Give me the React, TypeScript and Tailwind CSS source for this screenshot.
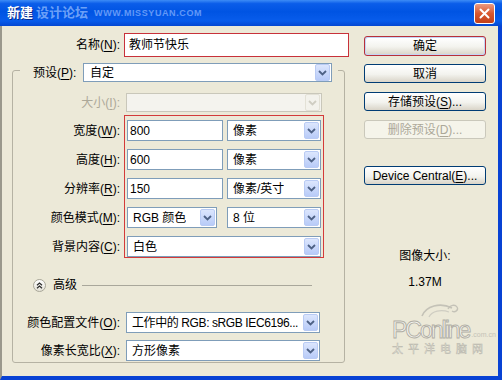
import React from "react";
import clsx from "clsx";

// small XP-style combo arrow
const Arrow = ({ disabled }: { disabled?: boolean }) => (
  <span
    className={clsx(
      "flex h-[17px] w-[15px] shrink-0 items-center justify-center rounded-[2px] border",
      disabled
        ? "border-[#e3e1d6] bg-[#f3f2ec]"
        : "border-[#b9cbf4] bg-[linear-gradient(to_bottom,#dce6fd,#b8cbf8)]"
    )}
  >
    <svg width="9" height="6" viewBox="0 0 9 6">
      <path d="M1 1l3.5 3.5L8 1" fill="none" stroke={disabled ? "#cfcdc2" : "#4d6185"} strokeWidth="1.8" />
    </svg>
  </span>
);

const Select = ({
  value,
  className,
  disabled,
}: {
  value?: string;
  className: string;
  disabled?: boolean;
}) => (
  <div
    className={clsx(
      "flex shrink-0 items-center justify-between border pl-[5px] pr-[1px]",
      disabled ? "border-[#c9c7ba] bg-[#f4f3ee]" : "border-[#7f9db9] bg-white",
      className
    )}
  >
    <span className="overflow-hidden whitespace-nowrap">{value}</span>
    <Arrow disabled={disabled} />
  </div>
);

const TextBox = ({ value, className }: { value: string; className: string }) => (
  <div className={clsx("flex shrink-0 items-center border border-[#7f9db9] bg-white pl-[2px]", className)}>
    {value}
  </div>
);

const Btn = ({ children, disabled }: { children: React.ReactNode; disabled?: boolean }) => (
  <div
    className={clsx(
      "flex h-[19px] items-center justify-center rounded-[3px] border",
      disabled
        ? "border-[#cac8bb] bg-[#f5f4ea] text-[#aca899]"
        : "border-[#003c74] bg-[linear-gradient(to_bottom,#ffffff,#f3f3ee_55%,#d9d4c8)]"
    )}
  >
    {children}
  </div>
);

const Key = ({ k }: { k: string }) => <u className="underline-offset-[2px]">{k}</u>;

const Label = ({ children, muted }: { children: React.ReactNode; muted?: boolean }) => (
  <span className={clsx("w-[107px] shrink-0 text-right whitespace-nowrap", muted && "text-[#aca899]")}>
    {children}
  </span>
);

export default function App() {
  return (
    <div className="flex h-[380px] w-[502px] flex-col overflow-hidden font-['Liberation_Sans','Noto_Sans_CJK_SC',sans-serif] text-[12px] leading-[14px] text-black">
      {/* title bar */}
      <div className="flex h-[26px] shrink-0 items-center bg-[linear-gradient(to_bottom,#3d8cf6_0%,#0b5de9_14%,#0054e3_45%,#085ceb_80%,#0447d2_100%)] pl-[7px]">
        <span className="text-[13px] font-bold text-white [text-shadow:1px_1px_#0a2a8a]">新建</span>
        <span className="ml-[3px] text-[13px] font-bold text-[#9cc2ff]/70">设计论坛</span>
        <span className="ml-[6px] text-[9px] font-bold tracking-[0.6px] text-[#8cb6ff]/70">WWW.MISSYUAN.COM</span>
        <div className="ml-auto mr-[7px] flex h-[21px] w-[21px] items-center justify-center rounded-[3px] border border-white bg-[linear-gradient(to_bottom,#eb9a82,#d9582f_50%,#c2401a)]">
          <svg width="11" height="11" viewBox="0 0 11 11">
            <path d="M1.5 1.5l8 8M9.5 1.5l-8 8" stroke="white" strokeWidth="2" strokeLinecap="round" />
          </svg>
        </div>
      </div>

      {/* body */}
      <div className="relative flex flex-1 border-b-[4px] border-l-[2px] border-r-[4px] border-[#0842d4] border-l-[#9a988c] bg-[#ece9d8]">
        {/* left column */}
        <div className="flex w-[347px] shrink-0 flex-col pl-[10px] pt-[7px]">
          <div className="flex items-center">
            <span className="w-[108px] text-right">
              名称(<Key k="N" />):
            </span>
            <div className="ml-[4px] flex h-[24px] w-[225px] items-center border border-[#c8313a] bg-white pl-[4px]">
              教师节快乐
            </div>
          </div>

          <fieldset className="mt-[6px] w-[333px] rounded-[3px] border border-[#b5b2a3] pb-[1px]">
            <legend className="ml-[7px] h-[14px]">
              <div className="flex items-start pl-[13px] pr-[6px]">
                <span className="flex h-[19px] w-[50px] items-center">
                  预设(<Key k="P" />):
                </span>
                <Select value="自定" className="h-[19px] w-[249px] pl-[6px]" />
              </div>
            </legend>

            <div className="mt-[16px] flex items-center">
              <Label muted>
                大小(<Key k="I" />):
              </Label>
              <Select disabled className="ml-[6px] h-[19px] w-[196px]" />
            </div>

            <div className="mt-[3px] flex">
              <div className="flex flex-col gap-[8px] pt-[5px]">
                {[
                  ["宽度", "W"],
                  ["高度", "H"],
                  ["分辨率", "R"],
                  ["颜色模式", "M"],
                  ["背景内容", "C"],
                ].map(([t, k]) => (
                  <div key={k} className="flex h-[21px] items-center">
                    <Label>
                      {t}(<Key k={k} />):
                    </Label>
                  </div>
                ))}
              </div>
              <div className="ml-[4px] flex flex-col gap-[8px] border border-[#d33a3a] px-[2px] pt-[4px]">
                <div className="flex">
                  <TextBox value="800" className="h-[21px] w-[96px]" />
                  <Select value="像素" className="ml-[4px] h-[21px] w-[94px]" />
                </div>
                <div className="flex">
                  <TextBox value="600" className="h-[21px] w-[96px]" />
                  <Select value="像素" className="ml-[4px] h-[21px] w-[94px]" />
                </div>
                <div className="flex">
                  <TextBox value="150" className="h-[21px] w-[96px]" />
                  <Select value="像素/英寸" className="ml-[4px] h-[21px] w-[94px]" />
                </div>
                <div className="flex">
                  <Select value="RGB 颜色" className="h-[21px] w-[90px]" />
                  <Select value="8 位" className="ml-[10px] h-[21px] w-[94px]" />
                </div>
                <div className="flex">
                  <Select value="白色" className="h-[21px] w-[194px]" />
                </div>
              </div>
            </div>

            {/* advanced */}
            <div className="mt-[20px] flex items-center pl-[20px] pr-[32px]">
              <span className="flex h-[13px] w-[13px] items-center justify-center rounded-full border border-[#a8a698] bg-[linear-gradient(to_bottom,#ffffff,#e3e1d6)]">
                <svg width="7" height="7" viewBox="0 0 7 7">
                  <path d="M1 3.2L3.5 1 6 3.2M1 6.2L3.5 4 6 6.2" fill="none" stroke="#2b2b2b" strokeWidth="1.2" />
                </svg>
              </span>
              <span className="ml-[7px]">高级</span>
              <span className="ml-[5px] h-px flex-1 bg-[#a9a79b]" />
            </div>

            <div className="mt-[20px] flex items-center">
              <Label>
                颜色配置文件(<Key k="O" />):
              </Label>
              <Select
                value="工作中的 RGB: sRGB IEC6196..."
                className="ml-[6px] h-[21px] w-[194px] pl-[4px] tracking-[-0.4px]"
              />
            </div>
            <div className="mt-[7px] flex items-center">
              <Label>
                像素长宽比(<Key k="X" />):
              </Label>
              <Select value="方形像素" className="ml-[6px] h-[21px] w-[194px]" />
            </div>
          </fieldset>
        </div>

        {/* right column */}
        <div className="ml-[15px] flex w-[122px] flex-col pt-[10px]">
          <div className="h-[20px] rounded-[3px] border border-[#b8303a] bg-[#c5d5f5] p-px">
            <div className="flex h-full items-center justify-center rounded-[2px] bg-[linear-gradient(to_bottom,#ffffff,#f3f3ee_55%,#dcd7cb)]">
              确定
            </div>
          </div>
          <div className="mt-[8px]">
            <Btn>取消</Btn>
          </div>
          <div className="mt-[9px]">
            <Btn>
              存储预设(<Key k="S" />)...
            </Btn>
          </div>
          <div className="mt-[9px]">
            <Btn disabled>
              删除预设(<Key k="D" />)...
            </Btn>
          </div>
          <div className="mt-[27px]">
            <Btn>
              Device Central(<Key k="E" />)...
            </Btn>
          </div>
          <div className="mt-[64px] text-center">图像大小:</div>
          <div className="mt-[12px] text-center">1.37M</div>
        </div>

        {/* pconline watermark */}
        <div className="pointer-events-none absolute left-[390px] top-[274px] flex flex-col items-start">
          <svg width="44" height="18" viewBox="0 0 44 18" className="ml-[26px]">
            <path d="M4 16c4-10 18-14 30-8" fill="none" stroke="#c4c2b7" strokeWidth="1.6" />
            <path d="M11 17c3-6 12-8 20-5" fill="none" stroke="#cfcdc2" strokeWidth="1.3" />
            <path d="M30 9c2-4 7-5 9-2s-2 6-5 4" fill="none" stroke="#c4c2b7" strokeWidth="1.3" />
          </svg>
          <div className="flex items-end">
            <span className="text-[23px] leading-[24px] tracking-[-2px] text-[#f8f7f2] [-webkit-text-stroke:0.9px_#b0aea4]">
              PConline
            </span>
            <span className="mb-[3px] ml-[2px] text-[7px] leading-[8px] text-[#c4c2b7]">.com.cn</span>
          </div>
          <span className="mt-[2px] text-[11px] leading-[11px] tracking-[5px] text-[#f5f4ee] [-webkit-text-stroke:0.5px_#b8b6ab]">
            太平洋电脑网
          </span>
        </div>
      </div>
    </div>
  );
}
